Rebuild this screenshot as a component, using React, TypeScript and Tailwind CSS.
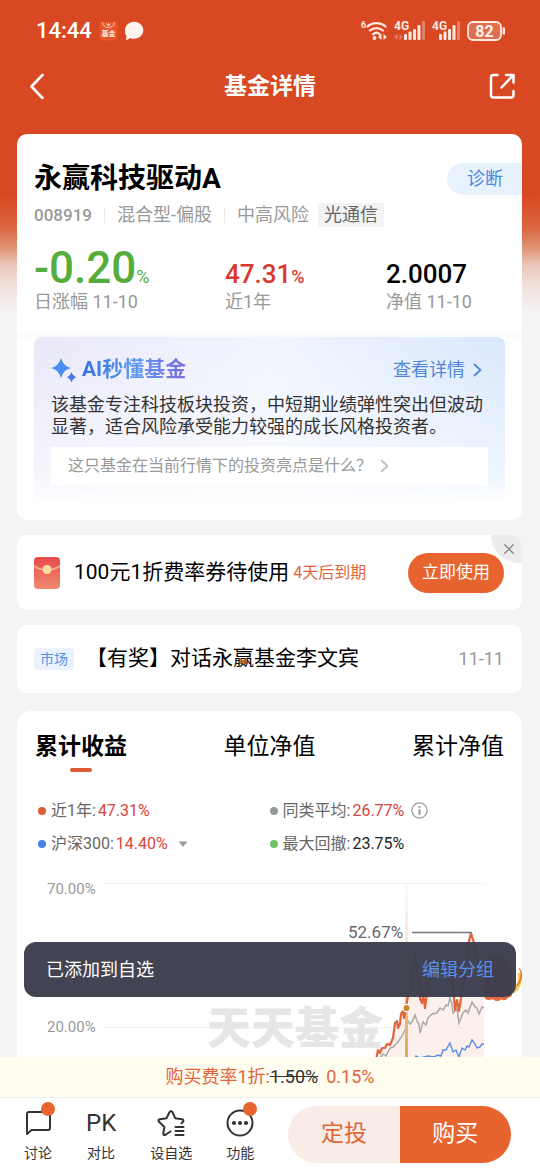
import type { ReactNode } from "react";

const tabs = ["累计收益", "单位净值", "累计净值"];

function AppBadgeIcon() {
  return (
    <svg width="19" height="20" viewBox="0 0 19 20" aria-hidden="true">
      <rect x="0.5" y="0.5" width="18" height="19" rx="4" fill="#ea5429" />
      <path d="M3.5 1.5C4 5 6.500 6.500 9.500 6.500S15 5 15.500 1.500M7 2.500l2.500 2 2.500-2M9.500 2.500v3" fill="none" stroke="#ffe9e1" strokeWidth="0.800" />
      <text x="9.5" y="15" fontSize="7" fontWeight="700" textAnchor="middle" fill="#ffe9e1">
        基金
      </text>
    </svg>
  );
}

function BubbleIcon() {
  return (
    <svg width="20" height="20" viewBox="0 0 20 20" aria-hidden="true">
      <path d="M10.200.8C15.400.8 19.300 4.600 19.300 9.300s-3.900 8.500-9.100 8.500c-1.500 0-2.900-.3-4.100-.9-1 .9-2.800 1.800-4.600 1.900.7-1.100 1.100-2.400 1-3.500A8.200 8.200 0 0 1 1 9.300C1 4.600 5 .8 10.200.8Z" fill="#fff3ee" />
    </svg>
  );
}

function WifiIcon() {
  return (
    <svg width="27" height="21" viewBox="0 0 27 21" fill="none" aria-hidden="true">
      <text x="0" y="8" fontSize="9" fontWeight="700" fill="#ffe9e1">6</text>
      <path d="M6.500 6.500C11 2 19.500 2 24.500 6.500M9 10.500c3.600-3.300 9.300-3.300 13 0M12 14.300c2-1.800 4.800-1.800 6.800 0" stroke="#ffe9e1" strokeWidth="2.300" strokeLinecap="round" />
      <circle cx="13.500" cy="18" r="1.900" fill="#ffe9e1" />
      <path d="M20.500 14v6l-3.500-3zM22.500 14v6l3.500-3z" fill="#ffe9e1" />
    </svg>
  );
}

function SignalIcon({ arrows }: { arrows?: boolean }) {
  const x = arrows ? 10 : 7;
  return (
    <svg width={x + 22} height="21" viewBox={`0 0 ${x + 22} 21`} aria-hidden="true">
      <text x="0" y="10" fontSize="12" fontWeight="700" fill="#ffe9e1">4G</text>
      {arrows && <path d="M3.500 14v6L0 17zM5.500 14v6L9 17z" fill="#ffe9e1" opacity="0.350" />}
      <rect x={x} y="14" width="3" height="6" rx="1" fill="#ffe9e1" />
      <rect x={x + 4.5} y="11.500" width="3" height="8.500" rx="1" fill="#ffe9e1" />
      <rect x={x + 9} y="9" width="3" height="11" rx="1" fill="#ffe9e1" />
      <rect x={x + 13.5} y="5" width="3" height="15" rx="1" fill="#ffe9e1" />
      <rect x={x + 18} y="1" width="3" height="19" rx="1" fill="#ffe9e1" opacity="0.350" />
    </svg>
  );
}

function BatteryIcon() {
  return (
    <svg width="39" height="20" viewBox="0 0 39 20" aria-hidden="true">
      <rect x="1" y="1" width="33" height="18" rx="5" fill="#e06f50" stroke="#ffe9e1" strokeWidth="1.800" />
      <path d="M36.800 7.500v5" stroke="#ffe9e1" strokeWidth="2.400" strokeLinecap="round" />
      <text x="17.500" y="15.800" fontSize="16" fontWeight="700" textAnchor="middle" fill="#fff3ee">82</text>
    </svg>
  );
}

function Chevron({ className }: { className: string }) {
  return (
    <svg className={className} viewBox="0 0 9 14" fill="none" stroke="currentColor" strokeWidth="1.800" strokeLinecap="round" strokeLinejoin="round" aria-hidden="true">
      <path d="M1.500 1.500 7.500 7l-6 5.500" />
    </svg>
  );
}

function Metric({ label, className, children }: { label: string; className?: string; children: ReactNode }) {
  return (
    <div>
      <div className={`flex h-12 items-baseline leading-12 ${className ?? ""}`}>{children}</div>
      <div className="text-lg leading-5 text-[#999]">{label}</div>
    </div>
  );
}

function Legend({ dot, label, value, valueClass, children }: { dot: string; label: string; value: string; valueClass: string; children?: ReactNode }) {
  return (
    <div className="flex h-[33px] items-center text-base text-[#666]">
      <span className={`mr-[5px] size-2 rounded-full ${dot}`} />
      <span>{label}:</span>
      <span className={`ml-0.5 ${valueClass}`}>{value}</span>
      {children}
    </div>
  );
}

function ReturnChart() {
  const main =
    "M376 1060L378 1050L380 1053L382 1048L385 1048L387 1044L390 1045L393 1038L395 1023L397 1021L398 1028L400 1024L401 1014L403 1011L404 1018L406 1007L408 996L411 990L415 953L418 975L420 999L422 1003L423 993L425 1008L428 985L432 970L436 978L441 965L445 972L450 960L453 985L455 1010L457 1000L459 1011L461 998L463 985L466 965L468 945L471 933L474 943L476 956L480 966L484 962";
  return (
    <svg className="block w-full" viewBox="17 870 505 230" aria-label="累计收益走势图" role="img">
      <defs>
        <linearGradient id="cursor" x1="0" y1="885" x2="0" y2="1060" gradientUnits="userSpaceOnUse">
          <stop offset="0" stopColor="#fbe3d4" stopOpacity="0.200" />
          <stop offset="0.350" stopColor="#f7e3cb" />
          <stop offset="1" stopColor="#e0a04c" />
        </linearGradient>
      </defs>
      <path d="M104 883.500H485M104 955.500H485M104 1027.500H485" stroke="#f4f4f4" />
      <text x="207" y="1044" fontSize="44" fontWeight="900" fill="#e6e6e6">天天基金</text>
      <path d={`${main}V1100H376Z`} fill="#f9e4dd" fillOpacity="0.550" />
      <path d="M380 1058L383 1054L386 1056L390 1048L393 1047L397 1043L402 1036L406 1028L408 1021L410 1024L412 1022L415 1015L417 1021L419 1024L420 1033L423 1022L426 1025L428 1018L432 1014L437 1013L440 1008L443 1010L446 1005L448 1006L450 998L452 1004L453 1013L457 1009L459 1023L463 1013L466 1010L468 1013L472 1002L475 1007L477 1008L479 1014L482 1007L484 1008" fill="none" stroke="#aaa" strokeWidth="1.500" />
      <path d="M414 1060L416 1056L420 1058L428 1056L434 1057L438 1055L441 1056L443 1050L446 1050L450 1043L453 1052L456 1050L459 1057L462 1048L465 1050L467 1046L469 1047L472 1040L475 1044L477 1048L480 1047L482 1044L484 1044" fill="none" stroke="#5a8be0" strokeWidth="1.400" />
      <path d="M406.500 885V1100" stroke="url(#cursor)" strokeWidth="2.800" />
      <path d={main} fill="none" stroke="#e2663c" strokeWidth="2.200" strokeLinejoin="round" />
      <circle cx="406.500" cy="1008" r="3.600" fill="#c98627" stroke="#fff" strokeWidth="1.200" />
      <path d="M412 932.500H472" stroke="#777" strokeWidth="1.500" />
      <text x="348" y="938" fontSize="17" fill="#666">52.67%</text>
      <g fontSize="15" fill="#999">
        <text x="47" y="894">70.00%</text>
        <text x="47" y="1032">20.00%</text>
      </g>
    </svg>
  );
}

function Mascot() {
  return (
    <svg className="absolute right-4 bottom-14 w-[43px]" viewBox="0 0 43 55" aria-hidden="true">
      <path d="M3 50C5 57 10 52 13 54s4 2 6 0 4 2 7-1 4-1 5-4V30H3Z" fill="#e8693c" />
      <circle cx="16" cy="24" r="15" fill="#e8894c" />
      <circle cx="10" cy="29" r="2.500" fill="#333" />
      <circle cx="22" cy="29" r="2.500" fill="#333" />
      <path d="M32 46c5-4 8-10 7-19" fill="none" stroke="#f5c451" strokeWidth="4" />
      <path d="M36 40c4-6 5-10 4-15M38 22c4 5 3 9 1 13" fill="none" stroke="#e8693c" strokeWidth="1.200" />
    </svg>
  );
}

function NavItem({ label, badge, children }: { label: string; badge?: boolean; children: ReactNode }) {
  return (
    <button className="relative flex shrink-0 flex-col items-center gap-1.5 pt-1 text-sm leading-5 text-[#333]">
      <span className="flex h-7 items-center">{children}</span>
      {badge && <span className="absolute -top-[3px] left-[17px] size-[14px] rounded-full bg-[#e8642f]" />}
      {label}
    </button>
  );
}

export default function App() {
  return (
    <div className="relative flex h-screen flex-col overflow-hidden bg-[#f4f4f4] bg-[linear-gradient(#d84823_0px,#d84823_195px,#da6640_228px,#e09272_247px,#ebc4b6_264px,#f1ded8_282px,#f4f4f4_314px)] font-['Roboto','Noto_Sans_CJK_SC',sans-serif] text-black">
      <header className="shrink-0 text-white">
        <div className="flex items-center pt-5 pr-[34px] pl-9">
          <span className="text-[22px] leading-5 font-medium">14:44</span>
          <div className="ml-[7px] flex gap-1.5">
            <AppBadgeIcon />
            <BubbleIcon />
          </div>
          <div className="ml-auto flex items-center gap-[6px]">
            <WifiIcon />
            <SignalIcon arrows />
            <SignalIcon />
            <BatteryIcon />
          </div>
        </div>
        <div className="mt-[25px] mb-7 flex h-10 items-center justify-between pr-6 pl-7">
          <button aria-label="返回" className="w-6">
            <svg width="17" height="26" viewBox="0 0 17 26" fill="none" stroke="#fff" strokeWidth="2.600" strokeLinecap="round" strokeLinejoin="round">
              <path d="M14.500 2 3.500 13.500 14.500 25" />
            </svg>
          </button>
          <h1 className="pt-[3px] text-[23px] font-bold">基金详情</h1>
          <button aria-label="分享">
            <svg width="28" height="28" viewBox="0 0 28 28" fill="none" stroke="#fff" strokeWidth="2.500" strokeLinecap="round" strokeLinejoin="round">
              <path d="M9.500 3H5.500Q3 3 3 5.500V23q0 2.500 2.500 2.500H23q2.500 0 2.500-2.500V19M13.500 15.500 25 3.500M18 3H25.500V10.500" />
            </svg>
          </button>
        </div>
      </header>

      <main className="flex min-h-0 flex-1 flex-col gap-[15px] overflow-y-auto px-[17px] pr-[18px] [scrollbar-width:none]">
        <section className="shrink-0 rounded-[10px] bg-white pb-[17px]">
          <div className="border-b-2 border-[#fafafa] pt-[27px] pb-[23px] pl-[17px]">
            <div className="flex items-center justify-between">
              <h2 className="text-[28px] leading-9 font-bold">永赢科技驱动A</h2>
              <button className="h-8 rounded-l-full bg-[#e8f2fd] pr-[19px] pl-5 text-lg text-[#4a8ae0]">诊断</button>
            </div>
            <div className="mt-1.5 flex h-6 items-center text-lg text-[#999]">
              <span className="text-[17px] font-medium">008919</span>
              <span className="mx-3 h-4 w-px bg-[#e8e8e8]" />
              <span>混合型-偏股</span>
              <span className="mx-3 h-4 w-px bg-[#e8e8e8]" />
              <span>中高风险</span>
              <span className="ml-[9px] bg-[#f3f3f3] px-1.5 leading-6 text-[#666]">光通信</span>
            </div>
            <div className="mt-[17px] grid grid-cols-[191fr_161fr_136fr]">
              <Metric label="日涨幅 11-10">
                <span className="text-[44px] font-medium text-[#55ad3c]">-0.20</span>
                <span className="text-lg text-[#55ad3c]">%</span>
              </Metric>
              <Metric label="近1年" className="pt-1.5 font-medium text-[#d83a30]">
                <span className="text-[26px]">47.31</span>
                <span className="text-lg">%</span>
              </Metric>
              <Metric label="净值 11-10" className="pt-1.5 font-medium">
                <span className="text-[26px]">2.0007</span>
              </Metric>
            </div>
          </div>

          <div className="mx-[17px] rounded-t-lg bg-[linear-gradient(to_bottom,transparent_0%,rgba(255,255,255,0.4)_60%,rgba(255,255,255,0.6)_85%,#fff_100%),linear-gradient(to_right,#e9e8f9,#f1f5fe_50%,#dae8fd)] px-[17px] pt-[18px] pb-[18px]">
            <div className="flex h-[30px] items-center">
              <svg width="27" height="27" viewBox="0 0 27 27" className="mr-1" aria-hidden="true">
                <path d="M10 1Q12.500 9.500 20 11Q12.500 12.500 10 21Q7.500 12.500 0 11Q7.500 9.500 10 1Z" fill="#4a8ff0" />
                <path d="M20.500 15Q21.700 19 25.500 20.300Q21.700 21.500 20.500 25.500Q19.300 21.500 15.500 20.300Q19.300 19 20.500 15Z" fill="#4a78e0" />
              </svg>
              <h3 className="bg-gradient-to-r from-[#3a6fe0] via-[#5c9cf2] to-[#7a6cdc] bg-clip-text text-[21px] font-bold text-transparent">AI秒懂基金</h3>
              <a href="#detail" className="ml-auto flex items-center gap-2 pr-1.5 text-lg text-[#5287d6]">
                查看详情
                <Chevron className="h-3.5 w-[9px]" />
              </a>
            </div>
            <p className="mt-[9px] text-lg leading-[22px] text-[#333]">该基金专注科技板块投资，中短期业绩弹性突出但波动<br />显著，适合风险承受能力较强的成长风格投资者。</p>
            <button className="mt-[9px] flex h-[38px] w-full items-center bg-white pl-[17px] text-base text-[#999]">
              这只基金在当前行情下的投资亮点是什么？
              <Chevron className="ml-2 h-3.5 w-[9px] text-[#c0c0c0]" />
            </button>
          </div>
        </section>

        <section className="relative flex h-[75px] shrink-0 items-center overflow-hidden rounded-[10px] bg-white pr-[18px] pl-[17px]">
          <svg width="26" height="32" viewBox="0 0 26 32" aria-hidden="true">
            <defs>
              <linearGradient id="env" x1="0" y1="0" x2="0" y2="1">
                <stop stopColor="#e74b4b" />
                <stop offset="1" stopColor="#f08a70" />
              </linearGradient>
            </defs>
            <rect width="26" height="32" rx="4" fill="url(#env)" />
            <path d="M0 9Q13 17 26 9" fill="none" stroke="#f6b28d" strokeWidth="1.500" />
            <circle cx="13" cy="12.500" r="4.500" fill="#fbdc9c" />
          </svg>
          <span className="ml-[14px] text-[21px]">100元1折费率券待使用</span>
          <span className="ml-1 text-base text-[#e0663a]">4天后到期</span>
          <button className="ml-auto h-10 rounded-full bg-[#e8642f] px-[14px] text-[17px] text-white">立即使用</button>
          <button aria-label="关闭" className="absolute top-0 right-0 flex h-7 w-[31px] items-center justify-center rounded-bl-full bg-[#ececec] text-[#888]">
            <svg width="10" height="10" viewBox="0 0 10 10" stroke="currentColor" strokeWidth="1.400" strokeLinecap="round" className="ml-1">
              <path d="M.8.8l8.400 8.400M9.200.8.800 9.200" />
            </svg>
          </button>
        </section>

        <section className="flex h-[68px] shrink-0 items-center rounded-[10px] bg-white pr-[18px] pl-[17px]">
          <span className="rounded-sm bg-[#e9f2fd] px-1.5 text-sm leading-[22px] text-[#5590e4]">市场</span>
          <a href="#news" className="ml-3 text-[21px]">【有奖】对话永赢基金李文宾</a>
          <time className="ml-auto text-lg text-[#999]">11-11</time>
        </section>

        <section className="mt-[3px] shrink-0 rounded-t-[14px] bg-white pt-[19px]">
          <div role="tablist" className="flex justify-between px-[18px] text-[23px] leading-[34px]">
            {tabs.map((tab, i) => (
              <button key={tab} role="tab" aria-selected={i === 0} className={i === 0 ? "flex flex-col items-center gap-1 font-bold" : "self-start"}>
                {tab}
                {i === 0 && <span className="h-1 w-[22px] rounded-full bg-[#dc5b36]" />}
              </button>
            ))}
          </div>
          <div className="mt-[22px] mb-2.5 grid grid-cols-2 px-[21px]">
            <Legend dot="bg-[#dc5b36]" label="近1年" value="47.31%" valueClass="text-[#d8453a]" />
            <Legend dot="bg-[#999]" label="同类平均" value="26.77%" valueClass="text-[#d8453a]">
              <svg width="17" height="17" viewBox="0 0 17 17" fill="none" stroke="#999" strokeWidth="1.300" className="ml-[7px]" aria-hidden="true">
                <circle cx="8.500" cy="8.500" r="7.600" />
                <path d="M8.500 7.200V13M8.500 4v1.800" strokeWidth="2" />
              </svg>
            </Legend>
            <Legend dot="bg-[#4a82e4]" label="沪深300" value="14.40%" valueClass="text-[#d8453a]">
              <button aria-label="切换指数" className="ml-2.5">
                <svg width="10" height="6" viewBox="0 0 10 6" fill="#999">
                  <path d="M.5.500h9L5 5.800z" />
                </svg>
              </button>
            </Legend>
            <Legend dot="bg-[#72c466]" label="最大回撤" value="23.75%" valueClass="text-[#222]" />
          </div>
          <ReturnChart />
        </section>
      </main>

      <footer className="relative shrink-0">
        <div className="absolute inset-x-0 bottom-full">
          <Mascot />
          <div role="status" className="relative mx-6 mb-[60px] flex h-[55px] items-center justify-between rounded-xl bg-[#3c3d4d]/97 px-[22px] text-lg text-white">
            已添加到自选
            <button className="text-[#5a90ea]">编辑分组</button>
          </div>
        </div>
        <p className="flex h-10 items-center justify-center bg-[#fffcf0] text-lg text-[#e0663a]">
          <span>购买费率1折:</span>
          <s className="text-[#333]">1.50%</s>
          <span className="ml-2">0.15%</span>
        </p>
        <nav className="flex h-[73px] items-center gap-[34px] border-t border-[#f0f0f0] bg-white pr-[29px] pl-6">
          <NavItem label="讨论" badge>
            <svg width="26" height="26" viewBox="0 0 26 26" fill="none" stroke="#333" strokeWidth="2" strokeLinejoin="round">
              <path d="M2 24V4q0-2 2-2H23q2 0 2 2V18q0 2-2 2H6.500Z" />
            </svg>
          </NavItem>
          <NavItem label="对比">
            <span className="text-2xl">PK</span>
          </NavItem>
          <NavItem label="设自选">
            <svg width="28" height="28" viewBox="0 0 28 28" fill="none" stroke="#333" strokeWidth="2" strokeLinejoin="round" strokeLinecap="round">
              <path d="M13.500 22.500 8.800 25.500Q6 27 6.300 24L7.400 18 2 12.800Q.5 10.800 3 10.300L9.500 9.300 12.600 3Q14 .8 15.400 3L18.300 9.300 25 10.300Q27.300 10.800 26 12.800L24.500 14.300M18.500 18H26.500M18.500 22H26.500M18.500 26H26.500" />
            </svg>
          </NavItem>
          <NavItem label="功能" badge>
            <svg width="28" height="28" viewBox="0 0 28 28" fill="#333">
              <circle cx="14" cy="14" r="12.500" fill="none" stroke="#333" strokeWidth="2" />
              <circle cx="8" cy="14" r="2.100" />
              <circle cx="14" cy="14" r="2.100" />
              <circle cx="20" cy="14" r="2.100" />
            </svg>
          </NavItem>
          <div className="flex h-[57px] flex-1 overflow-hidden rounded-full text-[23px]">
            <button className="flex-1 bg-[#f9ece7] text-[#e0663a]">定投</button>
            <button className="flex-1 bg-[#e8642f] text-white">购买</button>
          </div>
        </nav>
      </footer>
    </div>
  );
}
